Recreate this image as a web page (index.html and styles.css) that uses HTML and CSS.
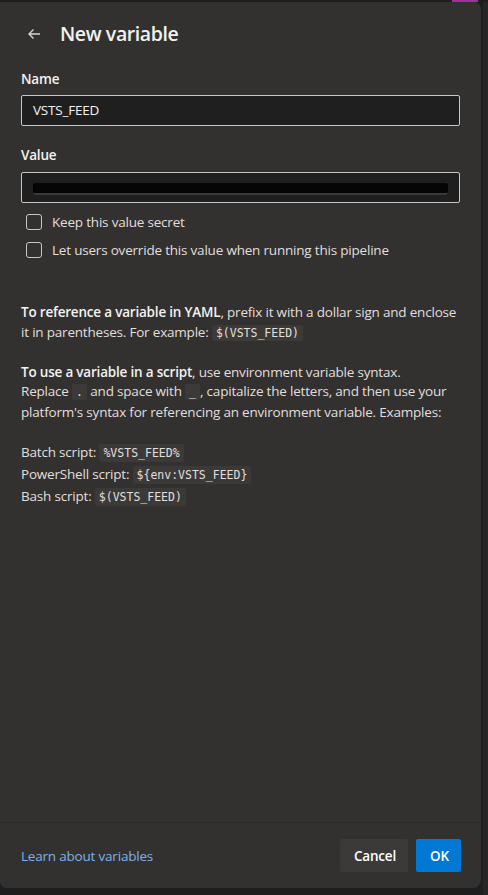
FILE: index.html
```html
<!DOCTYPE html>
<html>
<head>
<meta charset="utf-8">
<link rel="stylesheet" href="styles.css">
</head>
<body>
<div class="stage">
  <div class="panel">
    <div class="head">
      <svg class="back" width="16" height="16" viewBox="0 0 16 16"><path d="M14 8H3M7.5 3.5L3 8l4.5 4.5" fill="none" stroke="#d6d4d2" stroke-width="1.4"/></svg>
      <h1 class="title">New variable</h1>
    </div>
    <div class="body">
      <label class="label">Name</label>
      <div class="input">VSTS_FEED</div>
      <label class="label label-value">Value</label>
      <div class="input"><span class="redact"></span></div>
      <div class="checks">
        <div class="check"><span class="box"></span><span>Keep this value secret</span></div>
        <div class="check"><span class="box"></span><span>Let users override this value when running this pipeline</span></div>
      </div>
      <div class="help">
        <p><b>To reference a variable in YAML</b>, prefix it with a dollar sign and enclose it in parentheses. For example: <code>$(VSTS_FEED)</code></p>
        <p><b>To use a variable in a script</b>, use environment variable syntax.<br>Replace <code>.</code> and space with <code>_</code>, capitalize the letters, and then use your platform's syntax for referencing an environment variable. Examples:</p>
        <p class="examples">Batch script: <code>%VSTS_FEED%</code><br>PowerShell script: <code>${env:VSTS_FEED}</code><br>Bash script: <code>$(VSTS_FEED)</code></p>
      </div>
    </div>
    <div class="footer">
      <a class="link">Learn about variables</a>
      <div class="buttons">
        <button class="btn btn-cancel">Cancel</button>
        <button class="btn btn-ok">OK</button>
      </div>
    </div>
  </div>
  <div class="edge"></div>
</div>
</body>
</html>
```
FILE: styles.css
```css
* { box-sizing: border-box; }
html, body { margin: 0; padding: 0; }
body {
  width: 488px;
  height: 895px;
  overflow: hidden;
  background: #1e1e1e;
  font-family: "Open Sans", "Noto Sans", sans-serif;
  color: #e1dfdd;
}
.stage {
  display: flex;
  height: 895px;
  padding-top: 2px;
  background: linear-gradient(to right, #1e1e1e 0, #1e1e1e 452px, #a22fa0 452px, #a22fa0 478px, #1e1e1e 478px) top / 100% 2px no-repeat, #1e1e1e;
}
.panel {
  width: 481px;
  height: 886px;
  background: #323130;
  border-radius: 0 8px 8px 6px;
  display: flex;
  flex-direction: column;
}
.edge {
  flex: 1;
  margin-left: 2px;
  background: #262626;
}
.head {
  display: flex;
  align-items: center;
  height: 64px;
  padding: 0 0 0 26px;
}
.back { margin-right: 18px; margin-top: 0; }
.title {
  margin: 0 0 2px 0;
  font-size: 19.5px;
  font-weight: 600;
  color: #f3f2f1;
  letter-spacing: -0.4px;
}
.body {
  flex: 1;
  padding: 3px 21px 0 21px;
}
.label {
  display: block;
  font-size: 13.5px;
  font-weight: 600;
  color: #f3f2f1;
  line-height: 20px;
  margin-bottom: 6px;
  letter-spacing: -0.2px;
}
.label-value { margin-top: 19px; margin-bottom: 7px; }
.input {
  height: 31px;
  border: 1px solid #c8c6c4;
  border-radius: 2px;
  background: #201f1f;
  color: #f3f2f1;
  font-size: 13.5px;
  line-height: 29px;
  padding: 0 11px;
  display: flex;
  align-items: center;
  letter-spacing: -0.2px;
}
.redact {
  display: block;
  height: 10px;
  width: 100%;
  background: #050505;
  border-radius: 2px;
  margin-top: 1px;
  box-shadow: 0 3px 0 -1px #3a3a3a;
}
.checks { padding: 5px 0 0 5px; }
.check {
  display: flex;
  align-items: center;
  height: 28px;
  font-size: 13.5px;
  color: #e1dfdd;
  letter-spacing: -0.2px;
}
.box {
  width: 16px;
  height: 16px;
  border: 1px solid #c8c6c4;
  border-radius: 3px;
  margin-right: 10px;
  flex: none;
}
.help {
  margin-top: 39px;
  font-size: 13.5px;
  line-height: 19.5px;
  color: #e1dfdd;
  letter-spacing: -0.2px;
}
.help p { margin: 0 0 19.5px 0; }
.help b { font-weight: 600; color: #f3f2f1; }
.help code {
  font-family: "DejaVu Sans Mono", "Liberation Mono", monospace;
  font-size: 11.5px;
  background: #3b3a39;
  padding: 1px 4px;
  border-radius: 2px;
  letter-spacing: 0;
}
.examples { line-height: 21px; }
.help .examples code { padding: 2px 4px; }
.footer {
  height: 66px;
  border-top: 1px solid #292827;
  display: flex;
  align-items: center;
  justify-content: space-between;
  padding: 0 20px 0 21px;
}
.link {
  color: #7eb1e6;
  font-size: 13.5px;
  letter-spacing: -0.2px;
}
.buttons { display: flex; gap: 8px; }
.btn {
  height: 33px;
  border: none;
  border-radius: 2px;
  font-family: "Open Sans", "Noto Sans", sans-serif;
  font-size: 13.5px;
  font-weight: 600;
  color: #ffffff;
  padding: 0 14px;
  letter-spacing: -0.2px;
}
.btn-cancel { background: #3b3a39; width: 68px; }
.btn-ok { background: #0078d4; width: 45px; }
```
